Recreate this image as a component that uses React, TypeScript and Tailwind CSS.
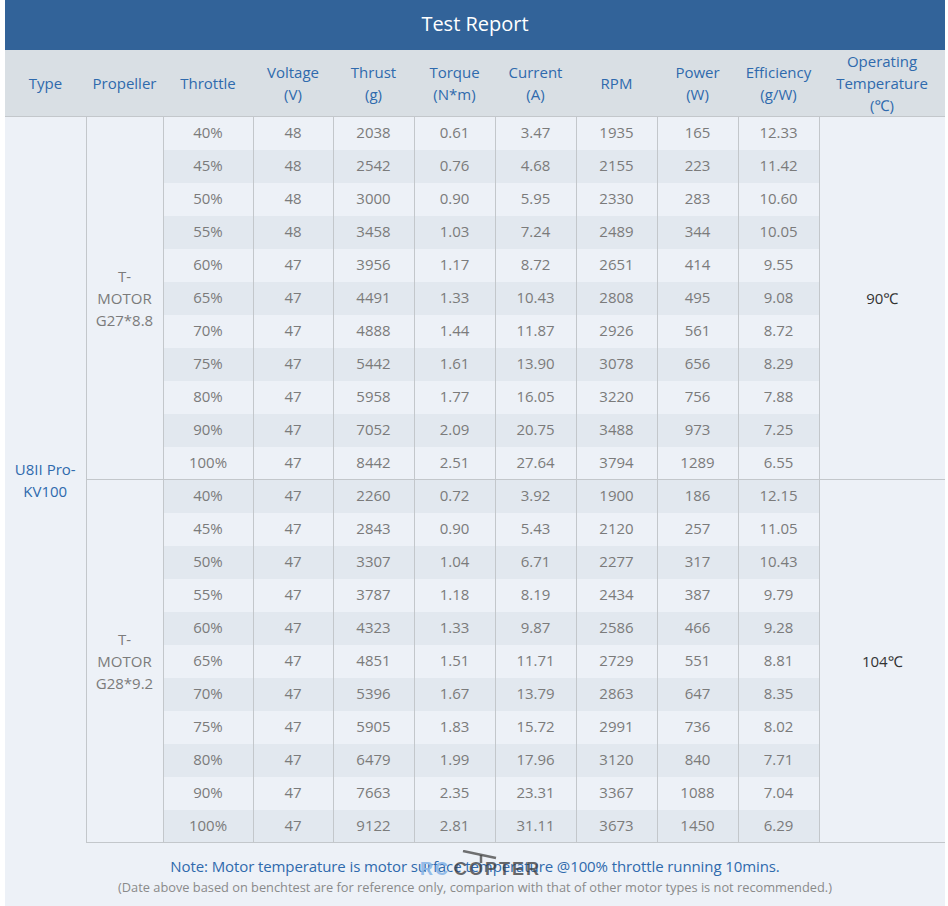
import React from 'react';

type Row = [string, string, string, string, string, string, string, string];

const groups: { prop: string[]; temp: string; rows: Row[] }[] = [
  {
    prop: ['T-', 'MOTOR', 'G27*8.8'],
    temp: '90℃',
    rows: [
      ['40%', '48', '2038', '0.61', '3.47', '1935', '165', '12.33'],
      ['45%', '48', '2542', '0.76', '4.68', '2155', '223', '11.42'],
      ['50%', '48', '3000', '0.90', '5.95', '2330', '283', '10.60'],
      ['55%', '48', '3458', '1.03', '7.24', '2489', '344', '10.05'],
      ['60%', '47', '3956', '1.17', '8.72', '2651', '414', '9.55'],
      ['65%', '47', '4491', '1.33', '10.43', '2808', '495', '9.08'],
      ['70%', '47', '4888', '1.44', '11.87', '2926', '561', '8.72'],
      ['75%', '47', '5442', '1.61', '13.90', '3078', '656', '8.29'],
      ['80%', '47', '5958', '1.77', '16.05', '3220', '756', '7.88'],
      ['90%', '47', '7052', '2.09', '20.75', '3488', '973', '7.25'],
      ['100%', '47', '8442', '2.51', '27.64', '3794', '1289', '6.55'],
    ],
  },
  {
    prop: ['T-', 'MOTOR', 'G28*9.2'],
    temp: '104℃',
    rows: [
      ['40%', '47', '2260', '0.72', '3.92', '1900', '186', '12.15'],
      ['45%', '47', '2843', '0.90', '5.43', '2120', '257', '11.05'],
      ['50%', '47', '3307', '1.04', '6.71', '2277', '317', '10.43'],
      ['55%', '47', '3787', '1.18', '8.19', '2434', '387', '9.79'],
      ['60%', '47', '4323', '1.33', '9.87', '2586', '466', '9.28'],
      ['65%', '47', '4851', '1.51', '11.71', '2729', '551', '8.81'],
      ['70%', '47', '5396', '1.67', '13.79', '2863', '647', '8.35'],
      ['75%', '47', '5905', '1.83', '15.72', '2991', '736', '8.02'],
      ['80%', '47', '6479', '1.99', '17.96', '3120', '840', '7.71'],
      ['90%', '47', '7663', '2.35', '23.31', '3367', '1088', '7.04'],
      ['100%', '47', '9122', '2.81', '31.11', '3673', '1450', '6.29'],
    ],
  },
];

const headers: string[][] = [
  ['Type'],
  ['Propeller'],
  ['Throttle'],
  ['Voltage', '(V)'],
  ['Thrust', '(g)'],
  ['Torque', '(N*m)'],
  ['Current', '(A)'],
  ['RPM'],
  ['Power', '(W)'],
  ['Efficiency', '(g/W)'],
  ['Operating', 'Temperature', '(℃)'],
];

const widths = [81, 77, 90, 80, 81, 81, 81, 81, 81, 81, 126];

export default function App() {
  return (
    <div className="min-h-[906px] bg-white pl-[5px] pr-[3px] font-['Open_Sans','Noto_Sans',sans-serif]">
      <div className="w-[940px] bg-[#edf1f7]">
        {/* Title */}
        <div className="h-[50px] bg-[#326399] flex items-center justify-center pb-[2px] text-white text-[20px]">
          Test Report
        </div>

        <table className="w-full table-fixed border-collapse text-center">
          <colgroup>
            {widths.map((w, i) => (
              <col key={i} style={{ width: w }} />
            ))}
          </colgroup>
          <thead>
            <tr className="h-[66px] bg-[#d9dfe4] border-b border-[#c3c7cb]">
              {headers.map((h, i) => (
                <th key={i} className="font-normal text-[15px] leading-[22px] text-[#2f6aad] px-0">
                  {h.map((line, j) => (
                    <div key={j}>{line}</div>
                  ))}
                </th>
              ))}
            </tr>
          </thead>
          <tbody className="text-[15px] text-[#7b7b7b]">
            {groups.map((g, gi) =>
              g.rows.map((r, ri) => {
                const idx = gi * 11 + ri;
                const stripe = idx % 2 === 0 ? 'bg-[#edf1f7]' : 'bg-[#e2e8ef]';
                return (
                  <tr key={`${gi}-${ri}`} className="h-[33px]">
                    {gi === 0 && ri === 0 && (
                      <td rowSpan={22} className="bg-[#edf1f7] border-r border-[#c3c7cb] text-[#2f6aad] leading-[22px] align-middle">
                        <div>U8II Pro-</div>
                        <div>KV100</div>
                      </td>
                    )}
                    {ri === 0 && (
                      <td rowSpan={11} className="bg-[#edf1f7] border-r border-b border-[#c3c7cb] leading-[22px] align-middle">
                        {g.prop.map((p, k) => (
                          <div key={k}>{p}</div>
                        ))}
                      </td>
                    )}
                    {r.map((c, ci) => (
                      <td
                        key={ci}
                        className={`${stripe} border-r border-[#c3c7cb] ${ri === 10 ? 'border-b' : ''} p-0 pb-[2px]`}
                      >
                        {c}
                      </td>
                    ))}
                    {ri === 0 && (
                      <td rowSpan={11} className="bg-[#edf1f7] border-b border-[#c3c7cb] text-[#333333] align-middle">
                        {g.temp}
                      </td>
                    )}
                  </tr>
                );
              })
            )}
          </tbody>
        </table>

        {/* Footer note */}
        <div className="relative h-[64px] flex flex-col items-center pt-[13px]">
          <div className="text-[15px] leading-[20px] text-[#2f6aad] tracking-[-0.1px]">
            Note: Motor temperature is motor surface temperature @100% throttle running 10mins.
          </div>
          <div className="text-[12.8px] leading-[22px] text-[#8a8a8a]">
            (Date above based on benchtest are for reference only, comparion with that of other motor types is not recommended.)
          </div>

          {/* Watermark */}
          <div className="absolute left-[410px] top-[7px] w-[125px] h-[30px] pointer-events-none">
            <svg width="36" height="14" viewBox="0 0 36 14" className="absolute left-[47px] top-0">
              <line x1="1" y1="1" x2="34" y2="8" stroke="#444" strokeWidth="2.5" opacity="0.75" />
              <line x1="19" y1="5" x2="19" y2="13" stroke="#444" strokeWidth="2.5" opacity="0.75" />
            </svg>
            <div className="absolute left-[5px] top-[10px] flex text-[18px] font-bold leading-[18px] tracking-[2px] font-['Liberation_Sans',sans-serif]">
              <span className="text-[#8cb8e8] opacity-90">RC</span>
              <span className="text-[#3a3a3a] opacity-75 ml-[4px]">COPTER</span>
            </div>
          </div>
        </div>
      </div>
    </div>
  );
}
